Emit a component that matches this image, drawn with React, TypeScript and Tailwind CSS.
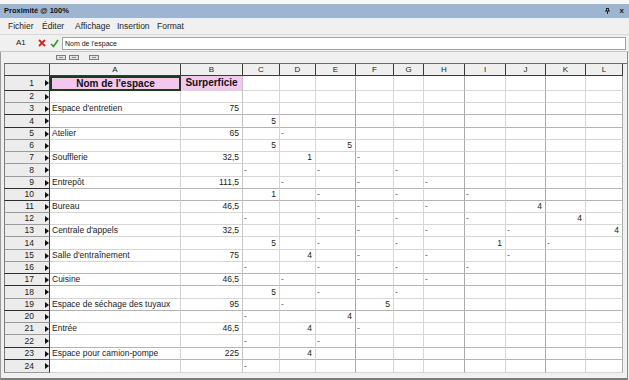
import React from 'react'

// Proximité @ 100% – worksheet window

type Col = { key: string; w: string; line: string }

const COLS: Col[] = [
  { key: 'A', w: 'w-[131px]', line: 'border-r-[#d2d2d2]' },
  { key: 'B', w: 'w-[62px]', line: 'border-r-[#c4c4c4]' },
  { key: 'C', w: 'w-[37px]', line: 'border-r-[#d6d6d6]' },
  { key: 'D', w: 'w-[36px]', line: 'border-r-[#d6d6d6]' },
  { key: 'E', w: 'w-[40px]', line: 'border-r-[#a9a9a9]' },
  { key: 'F', w: 'w-[38px]', line: 'border-r-[#d6d6d6]' },
  { key: 'G', w: 'w-[30px]', line: 'border-r-[#d6d6d6]' },
  { key: 'H', w: 'w-[41px]', line: 'border-r-[#a9a9a9]' },
  { key: 'I', w: 'w-[41px]', line: 'border-r-[#d6d6d6]' },
  { key: 'J', w: 'w-[40px]', line: 'border-r-[#a9a9a9]' },
  { key: 'K', w: 'w-[40px]', line: 'border-r-[#d6d6d6]' },
  { key: 'L', w: 'w-[37px]', line: 'border-r-[#a9a9a9]' },
]

// cells: col key -> value ; '-' is a dash (left aligned)
type Row = { n: number; name?: string; area?: string; cells?: Record<string, string>; tall?: boolean; dark?: boolean }

const ROWS: Row[] = [
  { n: 2 },
  { n: 3, name: "Espace d'entretien", area: '75', dark: true },
  { n: 4, cells: { C: '5' }, dark: true, tall: true },
  { n: 5, name: 'Atelier', area: '65', cells: { D: '-' } },
  { n: 6, cells: { C: '5', E: '5' } },
  { n: 7, name: 'Soufflerie', area: '32,5', cells: { D: '1', F: '-' } },
  { n: 8, cells: { C: '-', E: '-', G: '-' }, tall: true },
  { n: 9, name: 'Entrepôt', area: '111,5', cells: { D: '-', F: '-', H: '-' }, dark: true },
  { n: 10, cells: { C: '1', E: '-', G: '-', I: '-' }, dark: true },
  { n: 11, name: 'Bureau', area: '46,5', cells: { F: '-', H: '-', J: '4' } },
  { n: 12, cells: { C: '-', E: '-', G: '-', I: '-', K: '4' } },
  { n: 13, name: "Centrale d'appels", area: '32,5', cells: { F: '-', H: '-', J: '-', L: '4' } },
  { n: 14, cells: { C: '5', E: '-', G: '-', I: '1', K: '-' }, tall: true },
  { n: 15, name: "Salle d'entraînement", area: '75', cells: { D: '4', F: '-', H: '-', J: '-' } },
  { n: 16, cells: { C: '-', E: '-', G: '-', I: '-' }, dark: true },
  { n: 17, name: 'Cuisine', area: '46,5', cells: { D: '-', F: '-', H: '-' }, dark: true },
  { n: 18, cells: { C: '5', E: '-', G: '-' }, tall: true },
  { n: 19, name: 'Espace de séchage des tuyaux', area: '95', cells: { D: '-', F: '5' }, dark: true },
  { n: 20, cells: { C: '-', E: '4' } },
  { n: 21, name: 'Entrée', area: '46,5', cells: { D: '4', F: '-' } },
  { n: 22, cells: { C: '-', E: '-' }, dark: true, tall: true },
  { n: 23, name: 'Espace pour camion-pompe', area: '225', cells: { D: '4' }, dark: true },
  { n: 24, cells: { C: '-' }, tall: true },
]

const font = { fontFamily: '"Liberation Sans", Arial, sans-serif' }

function RowArrow() {
  return (
    <svg width="4" height="6" viewBox="0 0 4 6" className="shrink-0">
      <path d="M0 0 L4 3 L0 6 Z" fill="#111" />
    </svg>
  )
}

function RowHeader({ n, dark }: { n: number; dark?: boolean }) {
  return (
    <div
      className={`w-[46px] shrink-0 h-full flex items-center bg-[#ececec] border-l border-l-[#7a7a7a] border-r border-r-[#3a3a3a] border-b ${
        dark ? 'border-b-[#2e2e2e]' : 'border-b-[#9a9a9a]'
      }`}
    >
      <span className="w-[30px] text-right text-[8.5px] text-[#1b1b1b] leading-none">{n}</span>
      <span className="ml-[11px]">
        <RowArrow />
      </span>
    </div>
  )
}

function Cell({ col, value, dark }: { col: Col; value?: string; dark?: boolean }) {
  const dash = value === '-'
  return (
    <div
      className={`${col.w} shrink-0 h-full border-r ${col.line} border-b ${
        dark ? 'border-b-[#b4b4b4]' : 'border-b-[#d6d6d6]'
      } bg-white flex items-center ${dash ? 'justify-start pl-[1px]' : 'justify-end pr-[3px]'}`}
    >
      {value && (
        <span className={`text-[8.5px] leading-none ${dash ? 'text-[#555]' : 'text-[#1b1b1b]'}`}>{value}</span>
      )}
    </div>
  )
}

function DataRow({ row }: { row: Row }) {
  return (
    <div className={`flex ${row.tall ? 'h-[13px]' : 'h-[12px]'}`}>
      <RowHeader n={row.n} dark={row.dark} />
      {COLS.map(col => {
        if (col.key === 'A') {
          return (
            <div
              key={col.key}
              className={`${col.w} shrink-0 h-full border-r ${col.line} border-b ${
                row.dark ? 'border-b-[#b4b4b4]' : 'border-b-[#d6d6d6]'
              } bg-white flex items-center pl-[2px]`}
            >
              <span className="text-[8.5px] leading-none text-[#1b1b1b] whitespace-nowrap">{row.name}</span>
            </div>
          )
        }
        if (col.key === 'B') {
          return <Cell key={col.key} col={col} value={row.area} dark={row.dark} />
        }
        return <Cell key={col.key} col={col} value={row.cells?.[col.key]} dark={row.dark} />
      })}
    </div>
  )
}

function TinyButton({ w }: { w: string }) {
  return (
    <div className={`${w} h-[5px] border border-[#7d7d7d] bg-[#e2e2e2] flex items-center justify-center`}>
      <div className="w-[60%] h-[1px] bg-[#8a8a8a]" />
    </div>
  )
}

export default function App() {
  return (
    <div className="w-[629px] h-[380px] bg-[#f0f0f0] overflow-hidden flex flex-col" style={font}>
      {/* top strip */}
      <div className="h-[4px] bg-[#f7f7f7]" />

      {/* title bar */}
      <div className="h-[14px] bg-[#9db5d1] flex items-center pl-[4px] pr-[5px]">
        <span className="text-[7.5px] font-bold text-[#111] leading-none">Proximité @ 100%</span>
        <div className="ml-auto flex items-center gap-[10px]">
          <svg width="5" height="6" viewBox="0 0 5 6">
            <path d="M1 0.5 H4 M1.5 0.5 V3 M3.5 0.5 V3 M0 3 H5 M2.5 3 V6" stroke="#222" strokeWidth="1" fill="none" />
          </svg>
          <span className="text-[8px] font-bold text-[#222] leading-none">x</span>
        </div>
      </div>

      {/* menu bar */}
      <div className="h-[17px] flex items-center pl-[8px] text-[8.5px] text-[#1e1e1e] leading-none border-b border-b-[#d8d8d8]">
        <span className="w-[34px]">Fichier</span>
        <span className="w-[33px]">Éditer</span>
        <span className="w-[42px]">Affichage</span>
        <span className="w-[40px]">Insertion</span>
        <span>Format</span>
      </div>

      {/* formula bar */}
      <div className="h-[17px] flex items-center border-b border-b-[#c8c8c8]">
        <span className="ml-[16px] w-[20px] text-[8px] leading-none text-[#222]">A1</span>
        <svg width="8" height="8" viewBox="0 0 8 8" className="ml-[2px]">
          <path d="M1 1 L7 7 M7 1 L1 7" stroke="#d2261b" strokeWidth="1.8" />
        </svg>
        <svg width="9" height="9" viewBox="0 0 9 9" className="ml-[4px]">
          <path d="M1 5 L3.5 7.5 L8 1" stroke="#2c9a2c" strokeWidth="1.7" fill="none" />
        </svg>
        <div className="ml-[3px] w-[564px] h-[13px] bg-white border border-[#a3a3a3] flex items-center pl-[2px]">
          <span className="text-[7px] leading-none text-[#111]">Nom de l'espace</span>
        </div>
      </div>

      {/* grid panel */}
      <div className="flex-1 flex flex-col border-l border-l-[#9a9a9a] border-r border-r-[#8c8c8c] border-b-2 border-b-[#7c7c7c] mr-[1px]">
        {/* tiny buttons */}
        <div className="h-[11px] flex items-center pl-[55px] gap-[3px]">
          <TinyButton w="w-[10px]" />
          <TinyButton w="w-[10px]" />
          <div className="w-[4px]" />
          <TinyButton w="w-[10px]" />
        </div>

        <div className="ml-[3px] flex flex-col">
          {/* column header */}
          <div className="flex h-[13px] border-t border-t-[#6a6a6a]">
            <div className="w-[46px] shrink-0 h-full bg-[#ececec] border-l border-l-[#7a7a7a] border-r border-r-[#3a3a3a] border-b border-b-[#3a3a3a]" />
            {COLS.map(col => (
              <div
                key={col.key}
                className={`${col.w} shrink-0 h-full bg-[#efefef] border-r border-r-[#3a3a3a] border-b border-b-[#3a3a3a] flex items-center justify-center`}
              >
                <span className="text-[8px] leading-none text-[#222]">{col.key}</span>
              </div>
            ))}
          </div>

          {/* row 1 */}
          <div className="flex h-[15px]">
            <RowHeader n={1} dark />
            <div className="w-[131px] shrink-0 h-full bg-[#f4c7ef] border-2 border-[#1f3b1f] flex items-center justify-center">
              <span className="text-[10px] font-bold leading-none text-[#111]">Nom de l'espace</span>
            </div>
            <div className="w-[62px] shrink-0 h-full bg-[#f4c7ef] border-r border-r-[#c4c4c4] border-b border-b-[#d6d6d6] flex items-center justify-center">
              <span className="text-[10px] font-bold leading-none text-[#111]">Surperficie</span>
            </div>
            {COLS.slice(2).map(col => (
              <Cell key={col.key} col={col} />
            ))}
          </div>

          {ROWS.map(row => (
            <DataRow key={row.n} row={row} />
          ))}
        </div>
      </div>
    </div>
  )
}
